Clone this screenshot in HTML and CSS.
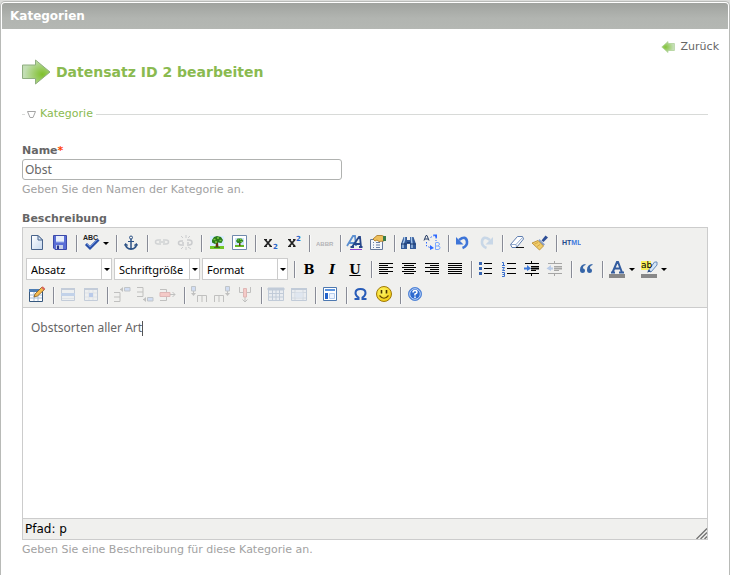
FILE: index.html
```html
<!DOCTYPE html>
<html lang="de">
<head>
<meta charset="utf-8">
<meta name="viewport" content="width=device-width, initial-scale=1">
<title>Kategorien</title>
<link rel="stylesheet" href="styles.css">
</head>
<body>
<svg class="defs" aria-hidden="true">
  <defs>
    <linearGradient id="gPage" x1="0" y1="0" x2="1" y2="1"><stop offset="0" stop-color="#fff"/><stop offset="1" stop-color="#c6d8ee"/></linearGradient>
    <radialGradient id="gArrow" cx=".72" cy=".6" r=".65"><stop offset="0" stop-color="#7fc02c"/><stop offset="1" stop-color="#c3deb4"/></radialGradient>
    <radialGradient id="gArrowBack" cx=".3" cy=".5" r=".65"><stop offset="0" stop-color="#84c43c"/><stop offset="1" stop-color="#c8e0bb"/></radialGradient>
    <radialGradient id="gSmile" cx=".4" cy=".35" r=".7"><stop offset="0" stop-color="#fff96a"/><stop offset="1" stop-color="#f2c80c"/></radialGradient>
  </defs>
</svg>
<main class="panel">
  <header class="panel-head"><h1>Kategorien</h1></header>
  <div class="panel-body">
    <nav class="back">
      <a href="#">
        <svg width="14" height="12" viewBox="0 0 14 12" aria-hidden="true"><path d="M.8 6 7 .6V2.500h6.400v7H7v2z" fill="url(#gArrowBack)" stroke="#a9cf91" stroke-width=".7"/></svg>
        <span>Zurück</span>
      </a>
    </nav>
    <h2 class="title">
      <svg width="29" height="26" viewBox="0 0 29 26" aria-hidden="true"><path d="M.5 6H13.500V1L28 13 13.500 25V19.500H.5z" fill="url(#gArrow)" stroke="#8fae80"/></svg>
      <span>Datensatz ID 2 bearbeiten</span>
    </h2>
    <form>
      <fieldset>
        <legend><svg width="9" height="9" viewBox="0 0 9 9" aria-hidden="true"><path d="M.5 1.500H8.500L6 7.500H3z" fill="#fff" stroke="#a5a5a5" stroke-linejoin="round"/></svg><a href="#">Kategorie</a></legend>
        <div class="field">
          <label for="name">Name<span class="required">*</span></label>
          <input id="name" class="text" type="text" value="Obst">
          <p class="hint">Geben Sie den Namen der Kategorie an.</p>
        </div>
        <div class="field">
          <span class="label" id="desc-label">Beschreibung</span>
          <div class="editor">
            <div class="toolbar" role="toolbar">
              <div class="tools">
                <button type="button" aria-label="Neu"><svg viewBox="0 0 20 20"><path d="M4.500 2.500H11L15.500 7V16.500H4.500z" fill="url(#gPage)" stroke="#49648c"/><path d="M11 2.500V7H15.500z" fill="#dbe8f8" stroke="#49648c"/></svg></button>
                <button type="button" aria-label="Speichern"><svg viewBox="0 0 20 20"><path d="M3.500 2.500H16.500V16.500H5L3.500 15z" fill="#5a6ed6" stroke="#3c4aa8"/><path d="M6 3H14V9H6z" fill="#e8effc"/><path d="M6 9H14" stroke="#9bb0ea"/><path d="M6 12H13V16H6z" fill="#c9d1e6"/><path d="M7 12.500H9V16H7z" fill="#27348a"/></svg></button>
                <span class="sep"></span>
                <button type="button" class="split" aria-label="Rechtschreibung"><svg viewBox="0 0 20 20"><text class="t-abc" x="2" y="7">ABC</text><path d="M5 11 9 15 17.500 6.500" fill="none" stroke="#294fa8" stroke-width="3"/><path d="M5.500 10.500 9 14 16.500 6.500" fill="none" stroke="#668bd8"/></svg><i></i></button>
                <span class="sep"></span>
                <button type="button" aria-label="Anker"><svg viewBox="0 0 20 20" fill="none" stroke="#2c5286"><circle cx="10" cy="4.500" r="1.500"/><path d="M10 6V16" stroke-width="1.500"/><path d="M7 8.500H13"/><path d="M4.500 11C5 15 7 16 10 16S15 15 15.500 11" stroke-width="1.800"/><path d="M3.500 12.500 4.500 10.500 7 12.500M13 12.500 15.500 10.500 16.500 12.500"/></svg></button>
                <span class="sep"></span>
                <button type="button" disabled aria-label="Link"><svg viewBox="0 0 20 20" fill="none" stroke="#8b919b" stroke-width="1.500"><path d="M9 7H6Q3.500 7 3.500 9T6 11H9M11 7H14Q16.500 7 16.500 9T14 11H11M7 9H13"/></svg></button>
                <button type="button" disabled aria-label="Link entfernen"><svg viewBox="0 0 20 20" fill="none" stroke="#777d87" stroke-width="1.500"><path d="M8 8H6Q3.500 8 3.500 10T6 12H9M12 7H14Q17 7 17 9.500T14 12H12M7 10H9M12 10H14"/><path d="M6 3 8 5M11 2V5M15 3 13 5M6 16 8 14M11 17V14M16 16 13 14" stroke-width="1"/></svg></button>
                <span class="sep"></span>
                <button type="button" aria-label="Bild"><svg viewBox="0 0 20 20"><path d="M4 3H18V16H4z" fill="#d9ecff"/><path d="M4 13H18V16H4z" fill="#72c626"/><path d="M9.500 14.500 10 9H12L12.500 14.500z" fill="#633a12"/><path d="M6 7 8 4 11 3 15 4 17 7 15.500 10 12 9.500 9 11 6 9.500z" fill="#287b1c"/><path d="M7.500 6.500H9.500M11 5H13M13.500 7.500H15.500M9 9H11" stroke="#80cc3e" stroke-width="1.500"/><path d="M8 14.500H14" stroke="#337d20"/></svg></button>
                <button type="button" aria-label="Bildrahmen"><svg viewBox="0 0 20 20"><path d="M3.500 2.500H17.500V16.500H3.500z" fill="#fff" stroke="#7089ad"/><path d="M6 5H15V14H6z" fill="#cde5fb"/><path d="M6 12H15V14H6z" fill="#65b824"/><path d="M10 13V8H11.500V13z" fill="#633a12"/><path d="M7 8 8.500 5.500H12.500L14.500 8 12 10H8.500z" fill="#2d8520"/><path d="M8.500 7H10M11 6.500H12.500M11.500 8.500H13" stroke="#80cc3e"/></svg></button>
                <span class="sep"></span>
                <button type="button" aria-label="Tiefgestellt"><svg viewBox="0 0 20 20"><path d="M4 6.500H7M9.500 6.500H12M4 13.500H7M9.500 13.500H12" stroke="#222"/><path d="M5 6.500 11 13.500M11 6.500 5 13.500" stroke="#222" stroke-width="1.800"/><text class="t-idx" x="13" y="16">2</text></svg></button>
                <button type="button" aria-label="Hochgestellt"><svg viewBox="0 0 20 20"><path d="M5 6.500H8M10 6.500H12.500M5 13.500H8M10 13.500H12.500" stroke="#222"/><path d="M6 6.500 12 13.500M12 6.500 6 13.500" stroke="#222" stroke-width="1.800"/><text class="t-idx" x="13" y="8">2</text></svg></button>
                <span class="sep"></span>
                <button type="button" disabled aria-label="Abkürzung"><svg viewBox="0 0 20 20"><text class="t-abbr" x="2" y="13">ABBR</text></svg></button>
                <span class="sep"></span>
                <button type="button" aria-label="Stil"><svg viewBox="0 0 20 20"><path d="M2 13 8 3H10L11 13M4 10H10" fill="none" stroke="#5c8fd0" stroke-width="1.800"/><path d="M7 14 14 4H15L16 14M9.500 11H15.500M5.500 14H9M14 14H17.500" fill="none" stroke="#27468a" stroke-width="1.800"/><path d="M5 16.500H17" stroke="#8d3fd0"/></svg></button>
                <button type="button" aria-label="Attribute"><svg viewBox="0 0 20 20"><path d="M2.500 6.500H14.500V16.500H2.500z" fill="#f4f7fb" stroke="#66799b"/><path d="M5 9.500H6M8 9.500H12M5 12H6M8 12H12M5 14.500H6M8 14.500H12" stroke="#687fa3"/><path d="M5 6 9 2.500H14L16 3.500V8L11 8.500 9 7 7 8z" fill="#eebf5b" stroke="#a47420" stroke-width=".8"/><path d="M15 3H18V8H15z" fill="#387c48"/></svg></button>
                <span class="sep"></span>
                <button type="button" aria-label="Suchen"><svg viewBox="0 0 20 20"><path d="M4.500 4H8V7H11V4H14.500L17 11V16H11V11H8V16H2V11z" fill="#345b99"/><path d="M5.500 4V7L4 11V15M12.500 4V7L13 11V15" fill="none" stroke="#a9c9ed" stroke-width="1.400"/><path d="M8 9.500H11M2 11H8M11 11H17" stroke="#1b386d"/></svg></button>
                <button type="button" aria-label="Ersetzen"><svg viewBox="0 0 20 20" fill="none"><path d="M2 7.500 4 2.500H5L7 7.500M3 6H6" stroke="#273d66"/><path d="M13.500 9.500V16.500H16Q18 16.500 18 14.500 18 13 16 13H14M14 9.500H16Q17.500 10 17.500 11T16 13" stroke="#79a7ff"/><path d="M8.500 4.500 12 2.500M14 4V8M4.500 9V13L9 15" stroke="#2c68ff" stroke-dasharray="1.500 1.500"/><path d="M11 1.500H15V5.500zM8 12 12 15 8 17z" fill="#2c68ff"/></svg></button>
                <span class="sep"></span>
                <button type="button" aria-label="Rückgängig"><svg viewBox="0 0 20 20"><path d="M6 7Q13 2 14 8.500 14.500 13 9.500 15" fill="none" stroke="#3e75d8" stroke-width="2.600"/><path d="M3 4V11.500H10.500z" fill="#3e75d8"/></svg></button>
                <button type="button" disabled aria-label="Wiederholen"><svg viewBox="0 0 20 20"><path d="M14 7Q7 2 6 8.500 5.500 13 10.500 15" fill="none" stroke="#6f9ed8" stroke-width="2.600"/><path d="M17 4V11.500H9.500z" fill="#6f9ed8"/></svg></button>
                <span class="sep"></span>
                <button type="button" aria-label="Formatierung entfernen"><svg viewBox="0 0 20 20"><path d="M3.500 11.500 10.500 3.500H15.500L16.500 6 9.500 14.500H5z" fill="#fff" stroke="#5f7eb0"/><path d="M4 11.500H9L15.500 4.500M9 11.500 9.500 14" fill="none" stroke="#93abcf"/><path d="M9 14.500H17" stroke="#111"/></svg></button>
                <button type="button" aria-label="Aufräumen"><svg viewBox="0 0 20 20"><path d="M11.500 7.500 15.500 2.500 18 4.500 13.500 9z" fill="#2e4e96"/><path d="M9.500 6 15 11.500 13 13 8 8z" fill="#8aa1cb"/><path d="M2 10 8 7.500 13.500 13 9.500 17z" fill="#f0cc68" stroke="#b5862a" stroke-width=".8"/><path d="M4.500 11 8 9.500M7 13.500 10 11.500" stroke="#d8a845"/></svg></button>
                <span class="sep"></span>
                <button type="button" aria-label="HTML"><svg viewBox="0 0 20 20"><text class="t-html" x="1" y="12">HT<tspan>ML</tspan></text></svg></button>
              </div>
              <div class="tools">
                <span class="drop"><select aria-label="Absatz"><option>Absatz</option></select></span>
                <span class="drop"><select aria-label="Schriftgröße"><option>Schriftgröße</option></select></span>
                <span class="drop"><select aria-label="Format"><option>Format</option></select></span>
                <span class="sep"></span>
                <button type="button" class="glyph">B</button>
                <button type="button" class="glyph glyph-i">I</button>
                <button type="button" class="glyph glyph-u">U</button>
                <span class="sep"></span>
                <button type="button" aria-label="Linksbündig"><svg viewBox="0 0 20 20"><path class="ln" d="M3 4.500H17M3 6.500H12M3 8.500H17M3 10.500H12M3 12.500H17M3 14.500H12"/></svg></button>
                <button type="button" aria-label="Zentriert"><svg viewBox="0 0 20 20"><path class="ln" d="M3 4.500H17M5 6.500H15M3 8.500H17M5 10.500H15M3 12.500H17M5 14.500H15"/></svg></button>
                <button type="button" aria-label="Rechtsbündig"><svg viewBox="0 0 20 20"><path class="ln" d="M3 4.500H17M8 6.500H17M3 8.500H17M8 10.500H17M3 12.500H17M8 14.500H17"/></svg></button>
                <button type="button" aria-label="Blocksatz"><svg viewBox="0 0 20 20"><path class="ln" d="M3 4.500H17M3 6.500H17M3 8.500H17M3 10.500H17M3 12.500H17M3 14.500H17"/></svg></button>
                <span class="sep"></span>
                <button type="button" aria-label="Liste"><svg viewBox="0 0 20 20"><path class="ln" d="M8 4.500H16M8 9.500H16M8 14.500H16"/><path d="M3 3H6V6H3zM3 8H6V11H3zM3 13H6V16H3z" fill="#3563b0"/></svg></button>
                <button type="button" aria-label="Nummerierung"><svg viewBox="0 0 20 20"><path class="ln" d="M8 4.500H17M8 9.500H17M8 14.500H17"/><path d="M3 3.500H4.500V6M3 6.500H6M3 8.500H5.500L3.500 11.500H6M3 13.500H5.500V17.500H3M3.500 15.500H5.500" fill="none" stroke="#3970d0"/></svg></button>
                <button type="button" aria-label="Einrücken"><svg viewBox="0 0 20 20"><path class="ln" d="M3 4.500H17M9 7.500H17M9 11.500H14M3 14.500H17M9.500 2V4M9.500 15V17"/><path d="M9 9.500H17" stroke="#000" stroke-width="2"/><path d="M2 8.500H5V6L9 9.500 5 12V10.500H2z" fill="#3d78d8"/></svg></button>
                <button type="button" disabled aria-label="Ausrücken"><svg viewBox="0 0 20 20"><path class="ln" d="M3 4.500H17M9 7.500H17M9 11.500H14M3 14.500H17M9.500 2V4M9.500 15V17"/><path d="M9 9.500H17" stroke="#000" stroke-width="2"/><path d="M8 8.500H6V6L1.500 9.500 6 12V10.500H8z" fill="#3d78d8"/></svg></button>
                <span class="sep"></span>
                <button type="button" aria-label="Zitat"><svg viewBox="0 0 20 20"><path d="M9.500 5Q4 5.500 4 11 4 14 6.500 14 9 14 9 11.500 9 9.500 6.800 9.300 7 6.500 9.500 6zM16.500 5Q11 5.500 11 11 11 14 13.500 14 16 14 16 11.500 16 9.500 13.800 9.300 14 6.500 16.500 6z" fill="#3565a8"/></svg></button>
                <span class="sep"></span>
                <button type="button" class="split" aria-label="Textfarbe"><svg viewBox="0 0 20 20"><path d="M4 13.500H8M12 13.500H17M5.500 13.500 10 3H11L15 13.500M7.500 9.500H13" fill="none" stroke="#345d9f" stroke-width="2"/><path d="M2 15H18V19H2z" fill="#888"/></svg><i></i></button>
                <button type="button" class="split" aria-label="Hintergrundfarbe"><svg viewBox="0 0 20 20"><path d="M2 2H12V11H2z" fill="#f8ef59"/><path d="M9 12 15.500 3H18V6L12 13z" fill="#d5e5f6" stroke="#668bbb"/><path d="M8 13.500 10 10.500 12 12.500z" fill="#294d83"/><text class="t-ab" x="2" y="9">ab</text><path d="M2 15H18V19H2z" fill="#888"/></svg><i></i></button>
              </div>
              <div class="tools">
                <button type="button" aria-label="Tabelle"><svg viewBox="0 0 20 20"><path d="M2.500 4.500H15.500V16.500H2.500z" fill="#fff" stroke="#36587e"/><path d="M2 4H16V7H2z" fill="#4e7db2"/><path d="M3 10H15M3 13H15M7 7V16M11 7V16" stroke="#a9bfd6"/><path d="M7 12 8 9 15 2 17.500 4.500 10.500 11z" fill="#f5bb4e" stroke="#815a20" stroke-width=".8"/><path d="M15 2 17.500 4.500" stroke="#d8665c" stroke-width="2"/></svg></button>
                <span class="sep"></span>
                <button type="button" disabled aria-label="Zeile"><svg viewBox="0 0 20 20"><path d="M3.500 3.500H16.500V15.500H3.500z" fill="#e9eef6" stroke="#5f7dac"/><path d="M3 3H17V5H3z" fill="#5f7dac"/><path d="M3 8H17V11H3z" fill="#5c8ee0"/><path d="M4 13.500H16" stroke="#b8c5d8"/></svg></button>
                <button type="button" disabled aria-label="Zelle"><svg viewBox="0 0 20 20"><path d="M3.500 3.500H16.500V15.500H3.500z" fill="#e9eef6" stroke="#5f7dac"/><path d="M3 3H17V5H3z" fill="#5f7dac"/><path d="M4 8H16M4 12H16M8 5V15M12 5V15" stroke="#b8c5d8"/><path d="M8 8H12V12H8z" fill="#3e76e0"/></svg></button>
                <span class="sep"></span>
                <button type="button" disabled aria-label="Zeile davor"><svg viewBox="0 0 20 20"><path d="M2 7.500H8V16.500H2M2 12H8M8 4.500H11" fill="none" stroke="#555"/><path d="M12.500 2.500H18V6H12.500z" fill="#8db4ff" stroke="#567"/><path d="M8 4.500 11 2V7z" fill="#555"/></svg></button>
                <button type="button" disabled aria-label="Zeile danach"><svg viewBox="0 0 20 20"><path d="M2 2.500H8V11.500H2M2 7H8M8 14.500H11" fill="none" stroke="#555"/><path d="M12.500 12.500H18V16H12.500z" fill="#8db4ff" stroke="#567"/><path d="M8 14.500 11 12V17z" fill="#555"/></svg></button>
                <button type="button" disabled aria-label="Zeile löschen"><svg viewBox="0 0 20 20"><path d="M2 4.500H8.500V15.500H2" fill="none" stroke="#555"/><path d="M2 7.500H12V11.500H2z" fill="#ff7470" stroke="#b33"/><path d="M12 9.500H17M14.500 7 17 9.500 14.500 12" fill="none" stroke="#555"/></svg></button>
                <span class="sep"></span>
                <button type="button" disabled aria-label="Spalte davor"><svg viewBox="0 0 20 20"><path d="M8.500 17V10.500H17.500V17M13 10.500V17M4.500 6V10" fill="none" stroke="#555"/><path d="M2.500 1.500H6.500V6H2.500z" fill="#8db4ff" stroke="#567"/><path d="M2 8H7L4.500 11z" fill="#555"/></svg></button>
                <button type="button" disabled aria-label="Spalte danach"><svg viewBox="0 0 20 20"><path d="M2.500 17V10.500H11.500V17M7 10.500V17M15.500 6V10" fill="none" stroke="#555"/><path d="M13.500 1.500H17.500V6H13.500z" fill="#8db4ff" stroke="#567"/><path d="M13 8H18L15.500 11z" fill="#555"/></svg></button>
                <button type="button" disabled aria-label="Spalte löschen"><svg viewBox="0 0 20 20"><path d="M4.500 2V7.500H15.500V2M10 12V17M7.500 14.500 10 17 12.500 14.500" fill="none" stroke="#555"/><path d="M8.500 3.500H11.500V12H8.500z" fill="#ff7470" stroke="#b33"/></svg></button>
                <span class="sep"></span>
                <button type="button" disabled aria-label="Zellen teilen"><svg viewBox="0 0 20 20"><path d="M2.500 3.500H17.500V15.500H2.500z" fill="#dce6f5" stroke="#5878a8"/><path d="M2 3H18V5H2zM3 8.500H17M3 12H17M6.500 5V15M10 5V15M13.500 5V15" fill="#5878a8" stroke="#5878a8"/></svg></button>
                <button type="button" disabled aria-label="Zellen verbinden"><svg viewBox="0 0 20 20"><path d="M2.500 3.500H17.500V15.500H2.500z" fill="#dce6f5" stroke="#5878a8"/><path d="M2 3H18V5H2z" fill="#5878a8"/><path d="M3 7.500H17M3 13H17M6 5V15M14 5V15" stroke="#8da4c5"/><path d="M6.500 7.500H13.500V12.500H6.500z" fill="#b9d0f5"/></svg></button>
                <span class="sep"></span>
                <button type="button" aria-label="Vorlage"><svg viewBox="0 0 20 20"><path d="M3.500 2.500H16.500V15.500H3.500z" fill="#fff" stroke="#4e79b0"/><path d="M5 4H15V6H5z" fill="#5b94e0"/><path d="M5 8H8V14H5z" fill="#2464cc"/><path d="M9.500 8.500H14.500V13.500H9.500z" fill="#edf4ff" stroke="#b5cdee"/></svg></button>
                <span class="sep"></span>
                <button type="button" aria-label="Sonderzeichen"><svg viewBox="0 0 20 20"><path d="M3.500 14H7.500V12.500Q4.500 10.500 4.500 8 4.500 4 9.500 4T14.500 8Q14.500 10.500 11.500 12.500V14H15.500" fill="none" stroke="#285cb8" stroke-width="2"/></svg></button>
                <button type="button" aria-label="Smiley"><svg viewBox="0 0 20 20"><circle cx="10" cy="9" r="7.500" fill="url(#gSmile)" stroke="#a07a0a"/><path d="M7.500 5V8.500M12.500 5V8.500" stroke="#4a3500" stroke-width="1.600"/><path d="M5.500 10.500Q10 16 14.500 10.500" fill="none" stroke="#6b4d00" stroke-width="1.200"/></svg></button>
                <span class="sep"></span>
                <button type="button" aria-label="Hilfe"><svg viewBox="0 0 20 20"><circle cx="10" cy="9" r="6.500" fill="#2f6bd0" stroke="#5789d8"/><circle cx="10" cy="9" r="5.300" fill="none" stroke="#d5e5ff" stroke-width=".9"/><path d="M8 7.500Q8 5.500 10 5.500T12 7.200Q12 8.300 10 9V10.500M10 11.500V13" fill="none" stroke="#fff" stroke-width="1.500"/></svg></button>
              </div>
            </div>
            <div class="content" contenteditable="true" role="textbox" aria-multiline="true" aria-labelledby="desc-label"><p>Obstsorten aller Art<span class="caret"></span></p></div>
            <div class="status">
              <span>Pfad: p</span>
              <svg width="11" height="11" viewBox="0 0 11 11" aria-hidden="true"><path d="M.5 11 11 .5M4.500 11 11 4.500M8.500 11 11 8.500" stroke="#707070" stroke-width="1.300"/></svg>
            </div>
          </div>
          <p class="hint">Geben Sie eine Beschreibung für diese Kategorie an.</p>
        </div>
      </fieldset>
    </form>
  </div>
</main>
</body>
</html>
```
FILE: styles.css
```css
* { box-sizing: border-box; }

body {
  margin: 0;
  padding-top: 1px;
  min-height: 100vh;
  display: flex;
  flex-direction: column;
  background: #dcdddb;
  color: #666;
  font: 11px/14px Verdana, "DejaVu Sans", sans-serif;
}

.defs { position: absolute; width: 0; height: 0; }

a { color: inherit; text-decoration: none; }
h1, h2, p { margin: 0; }

.panel {
  flex: 1;
  padding: 1px 1px 0;
  border: 1px solid #b8bab7;
  border-bottom: 0;
  border-radius: 5px 5px 0 0;
  background: #fff;
}

.panel-head {
  padding: 0 8px;
  border-radius: 3px 3px 0 0;
  background: linear-gradient(#a0a39f, #b2b5b1 60%, #b4b7b3);
  color: #fff;
}

.panel-head h1 { font-size: 12px; line-height: 26px; }

.panel-body { padding: 11px 20px 0; }

.back {
  display: flex;
  justify-content: flex-end;
  margin-right: -11px;
}

.back a { display: flex; align-items: center; gap: 6px; }

.title {
  display: flex;
  align-items: center;
  gap: 5px;
  margin-top: 5px;
  color: #8aba50;
  font-size: 14px;
  line-height: 26px;
}

fieldset {
  min-width: 0;
  margin: 22px 0 0;
  padding: 0;
  border: 0 solid #d8dad8;
  border-top-width: 1px;
}

legend {
  display: flex;
  align-items: center;
  gap: 4px;
  margin-left: 3px;
  padding: 0 3px 0 2px;
  color: #8aba50;
}

.field { margin-top: 22px; }
.field + .field { margin-top: 14px; }

label, .label {
  display: block;
  font-weight: bold;
  line-height: 16px;
}

.required { color: #ff4200; }

.text {
  display: block;
  width: 320px;
  max-width: 100%;
  height: 21px;
  padding: 0 2px;
  border: 1px solid #b0b2b0;
  border-radius: 3px;
  background: #fff;
  color: #666;
  font: 12px "Noto Sans", sans-serif;
}

.hint {
  margin-top: 3px;
  color: #a2a2a2;
  font-size: 11px;
}

.editor { border: 1px solid #ccc; }

.toolbar {
  display: grid;
  gap: 4px;
  padding: 4px 3px 1px;
  background: #f0f0ee;
}

.tools { display: flex; flex-wrap: wrap; align-items: center; }

.tools button {
  display: flex;
  align-items: center;
  width: 22px;
  height: 22px;
  margin-right: 1px;
  padding: 1px;
  border: 0;
  background: none;
}

.tools button svg { flex: none; width: 20px; height: 20px; }
.tools button:disabled svg { opacity: .3; }
.tools .split { width: 31px; }

.split i {
  margin-left: 2px;
  border: 3px solid transparent;
  border-top-color: #000;
  border-bottom: 0;
}

.sep {
  width: 2px;
  height: 17px;
  margin: 0 2px 0 4px;
  border-left: 1px solid #888b96;
  border-right: 1px solid #fafafa;
}

.drop { position: relative; margin-right: 2px; }

.drop select {
  display: block;
  width: 86px;
  height: 22px;
  padding: 0 16px 0 4px;
  border: 1px solid #ccc;
  border-radius: 0;
  appearance: none;
  background: #fff;
  color: #000;
  font: 11px "Noto Sans", sans-serif;
}

.drop::before {
  content: "";
  position: absolute;
  top: 1px;
  right: 10px;
  bottom: 1px;
  border-left: 1px solid #ccc;
}

.drop::after {
  content: "";
  position: absolute;
  top: 10px;
  right: 2px;
  border: 3px solid transparent;
  border-top-color: #000;
  border-bottom: 0;
  pointer-events: none;
}

.tools .glyph {
  justify-content: center;
  color: #000;
  font: bold 13px "DejaVu Serif", serif;
}

.tools .glyph-i { font-style: italic; }
.tools .glyph-u { text-decoration: underline; }

.ln { fill: none; stroke: #000; }

.t-abc { font: bold 7px "Liberation Sans", sans-serif; fill: #222; }
.t-idx { font: bold 7px "DejaVu Sans", sans-serif; fill: #2864c8; }
.t-abbr { font: bold 6px "Liberation Sans", sans-serif; fill: #223; }
.t-html { font: bold 7px "Liberation Sans", sans-serif; fill: #234a8c; }
.t-html tspan { fill: #3f7be0; }
.t-ab { font: 9px "DejaVu Sans", sans-serif; fill: #000; }

.content {
  height: 212px;
  padding: 12px 8px;
  border: solid #ccc;
  border-width: 1px 0;
  outline: 0;
  font: 12px/16px "Noto Sans", sans-serif;
}

.caret {
  display: inline-block;
  width: 1px;
  height: 15px;
  background: #555;
  vertical-align: middle;
}

.status {
  display: flex;
  align-items: flex-end;
  justify-content: space-between;
  padding-left: 2px;
  background: #f0f0ee;
  color: #000;
}

.status span { font-size: 12px; line-height: 20px; }
```
